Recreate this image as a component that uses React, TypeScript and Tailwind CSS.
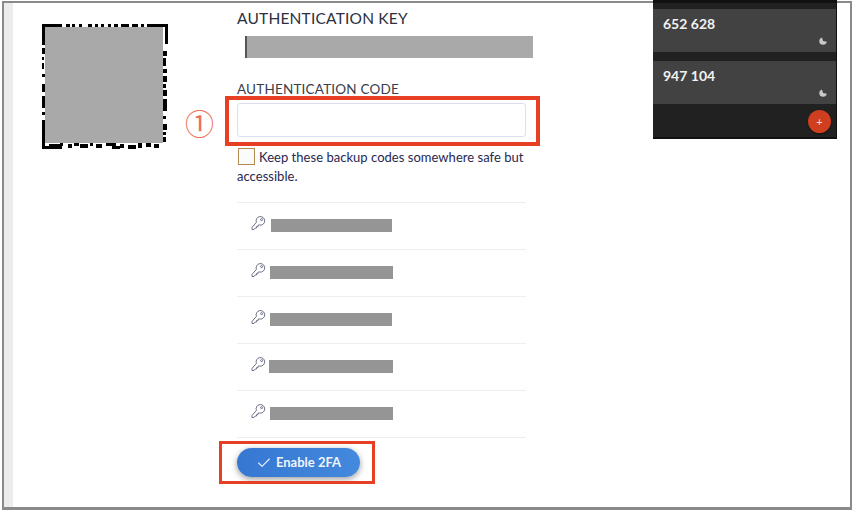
import React from 'react';
import { Check } from 'lucide-react';

// edge modules of the QR code that stick out around the grey cover
const qrModules = [
  [24, 0, 4, 3], [30, 0, 3, 3], [37, 0, 3, 3], [46, 0, 4, 3], [53, 0, 3, 3], [59, 0, 3, 3], [66, 0, 3, 3], [72, 0, 4, 3], [79, 0, 8, 3], [90, 0, 6, 3], [99, 0, 3, 3],
  [0, 24, 3, 6], [0, 33, 2, 3], [0, 39, 2, 6], [0, 50, 3, 3], [0, 60, 3, 8], [0, 72, 3, 12], [0, 88, 3, 3], [0, 96, 3, 8],
  [120, 27, 5, 5], [120, 34, 4, 8], [121, 45, 4, 4], [120, 52, 5, 6], [121, 60, 3, 4], [120, 66, 5, 6], [121, 75, 4, 12], [120, 92, 4, 3],
  [121, 100, 4, 6], [118, 108, 6, 3], [121, 113, 3, 5],
  [26, 120, 4, 4], [32, 119, 5, 3], [38, 120, 8, 4], [48, 119, 3, 3], [54, 120, 6, 4], [64, 119, 10, 3], [70, 122, 8, 3], [78, 120, 4, 4],
  [86, 121, 8, 4], [96, 119, 4, 5], [104, 119, 5, 4], [112, 120, 5, 4], [7, 120, 14, 2], [18, 117, 3, 5],
];

function QrCode() {
  return (
    <div className="relative h-[125px] w-[126px] shrink-0">
      <svg width="126" height="125" viewBox="0 0 126 125" className="block">
        <path d="M1.5 21V1.5H20M105 1.5H124.5V20M1.5 104V123.5H20" fill="none" stroke="#000" strokeWidth="3" />
        {qrModules.map(([x, y, w, h], i) => (
          <rect key={i} x={x} y={y} width={w} height={h} fill="#000" />
        ))}
      </svg>
      <div className="absolute left-[3px] top-[3px] h-[116px] w-[118px] bg-[#a9a9a9]" />
    </div>
  );
}

function KeyIcon() {
  return (
    <svg width="15" height="16" viewBox="0 0 15 16" fill="none" stroke="#6d6f86" strokeWidth="1" className="mb-[4px] shrink-0">
      <path d="M5.4 7.4A4.3 4.3 0 1 1 8.3 10L7 10.2V11.6H5.5V13H4.2L3 14.5H1V12.4Z" strokeLinejoin="round" />
      <circle cx="10.6" cy="4.6" r="1" />
    </svg>
  );
}

function BackupRow({ offset, width }: { offset: number; width: number }) {
  return (
    <div className="flex h-[47px] items-center border-t-[1.5px] border-[#eceef2] pb-[2px] pl-[14px]">
      <KeyIcon />
      <div className="h-[13px] bg-[#959595]" style={{ marginLeft: offset, width }} />
    </div>
  );
}

function PhoneRow({ code }: { code: string }) {
  return (
    <div className="relative h-[43px] bg-[#424242] pl-[10px] pt-[6px] text-[14px] font-bold leading-[17px] text-[#f2f2f2]">
      {code}
      <svg width="8" height="8" viewBox="0 0 8 8" className="absolute bottom-[7px] right-[9px]">
        <path d="M3 0.4A3.8 3.8 0 1 0 7.8 4.8L4 4Z" fill="#c9c9c9" />
      </svg>
    </div>
  );
}

export default function App() {
  return (
    <div className="relative h-[512px] w-[854px] overflow-hidden bg-white font-['Lato',sans-serif]">
      <div className="mx-[2px] mt-[1px] flex h-[509px] border-[2px] border-[#8a8a8a] border-b-[3px]">
        <div className="w-[9px] shrink-0 bg-[#ececec]" />
        <div className="flex flex-1 pl-[29px]">
          <div className="pt-[21px]">
            <QrCode />
          </div>
          <div className="ml-[69px] w-[289px] pt-[4px]">
            <h2 className="text-[15.5px] leading-[22px] tracking-[0.2px] text-[#2c3040]">AUTHENTICATION KEY</h2>
            <div className="ml-[8px] mt-[7px] h-[22px] w-[288px] border-l-[2px] border-[#555] bg-[#a9a9a9]" />
            <h2 className="mt-[20px] text-[13.5px] leading-[22px] tracking-[0.2px] text-[#3a3d4c]">AUTHENTICATION CODE</h2>
            <input
              type="text"
              className="mt-[3px] block h-[34px] w-[289px] rounded-[3px] border border-[#dcdff0] bg-white outline-none"
            />
            <div className="mt-[11px] text-[13px] leading-[19px] tracking-[0.03px] text-[#27284f]">
              <span className="ml-[1px] mr-[4px] inline-block h-[17px] w-[17px] border-[1.5px] border-[#b08a4e] bg-[#fbfbfb] align-[-3px]" />
              Keep these backup codes somewhere safe but accessible.
            </div>
            <div className="mt-[16px]">
              <BackupRow offset={5} width={121} />
              <BackupRow offset={4} width={123} />
              <BackupRow offset={4} width={122} />
              <BackupRow offset={3} width={124} />
              <BackupRow offset={4} width={123} />
              <div className="border-t-[1.5px] border-[#eceef2]" />
            </div>
            <button className="mt-[10px] flex h-[29px] w-[123px] items-center justify-center gap-[4px] rounded-full bg-gradient-to-r from-[#3677d2] to-[#4389dd] text-[13px] font-bold text-[#eef4fc] shadow-[0_2px_6px_rgba(0,0,0,0.4)]">
              <Check className="h-[16px] w-[16px]" strokeWidth={1.6} />
              Enable 2FA
            </button>
          </div>
        </div>
      </div>

      {/* phone screenshot pasted over the page */}
      <div className="absolute left-[653px] top-0 h-[139px] w-[184px] border-b-[2px] border-r border-[#111] bg-[#212121]">
        <div className="h-[3px] bg-[#111]" />
        <div className="mt-[6px]">
          <PhoneRow code="652 628" />
        </div>
        <div className="mt-[9px]">
          <PhoneRow code="947 104" />
        </div>
        <div className="absolute left-[155px] top-[110px] flex h-[23px] w-[23px] items-center justify-center rounded-full bg-[#d03e20] text-[11px] leading-none text-[#f6d9d0] shadow-[0_1px_2px_rgba(0,0,0,0.5)]">
          +
        </div>
      </div>

      {/* annotations */}
      <div className="absolute left-[225px] top-[96px] h-[50px] w-[315px] border-[4px] border-[#e63f23]" />
      <div className="absolute left-[219px] top-[441px] h-[43px] w-[156px] border-[3px] border-[#e63f23]" />
      <span className="absolute left-[185px] top-[102px] font-['Noto_Sans_CJK_JP',sans-serif] text-[29px] leading-[40px] text-[#ee6f58]">①</span>
    </div>
  );
}
